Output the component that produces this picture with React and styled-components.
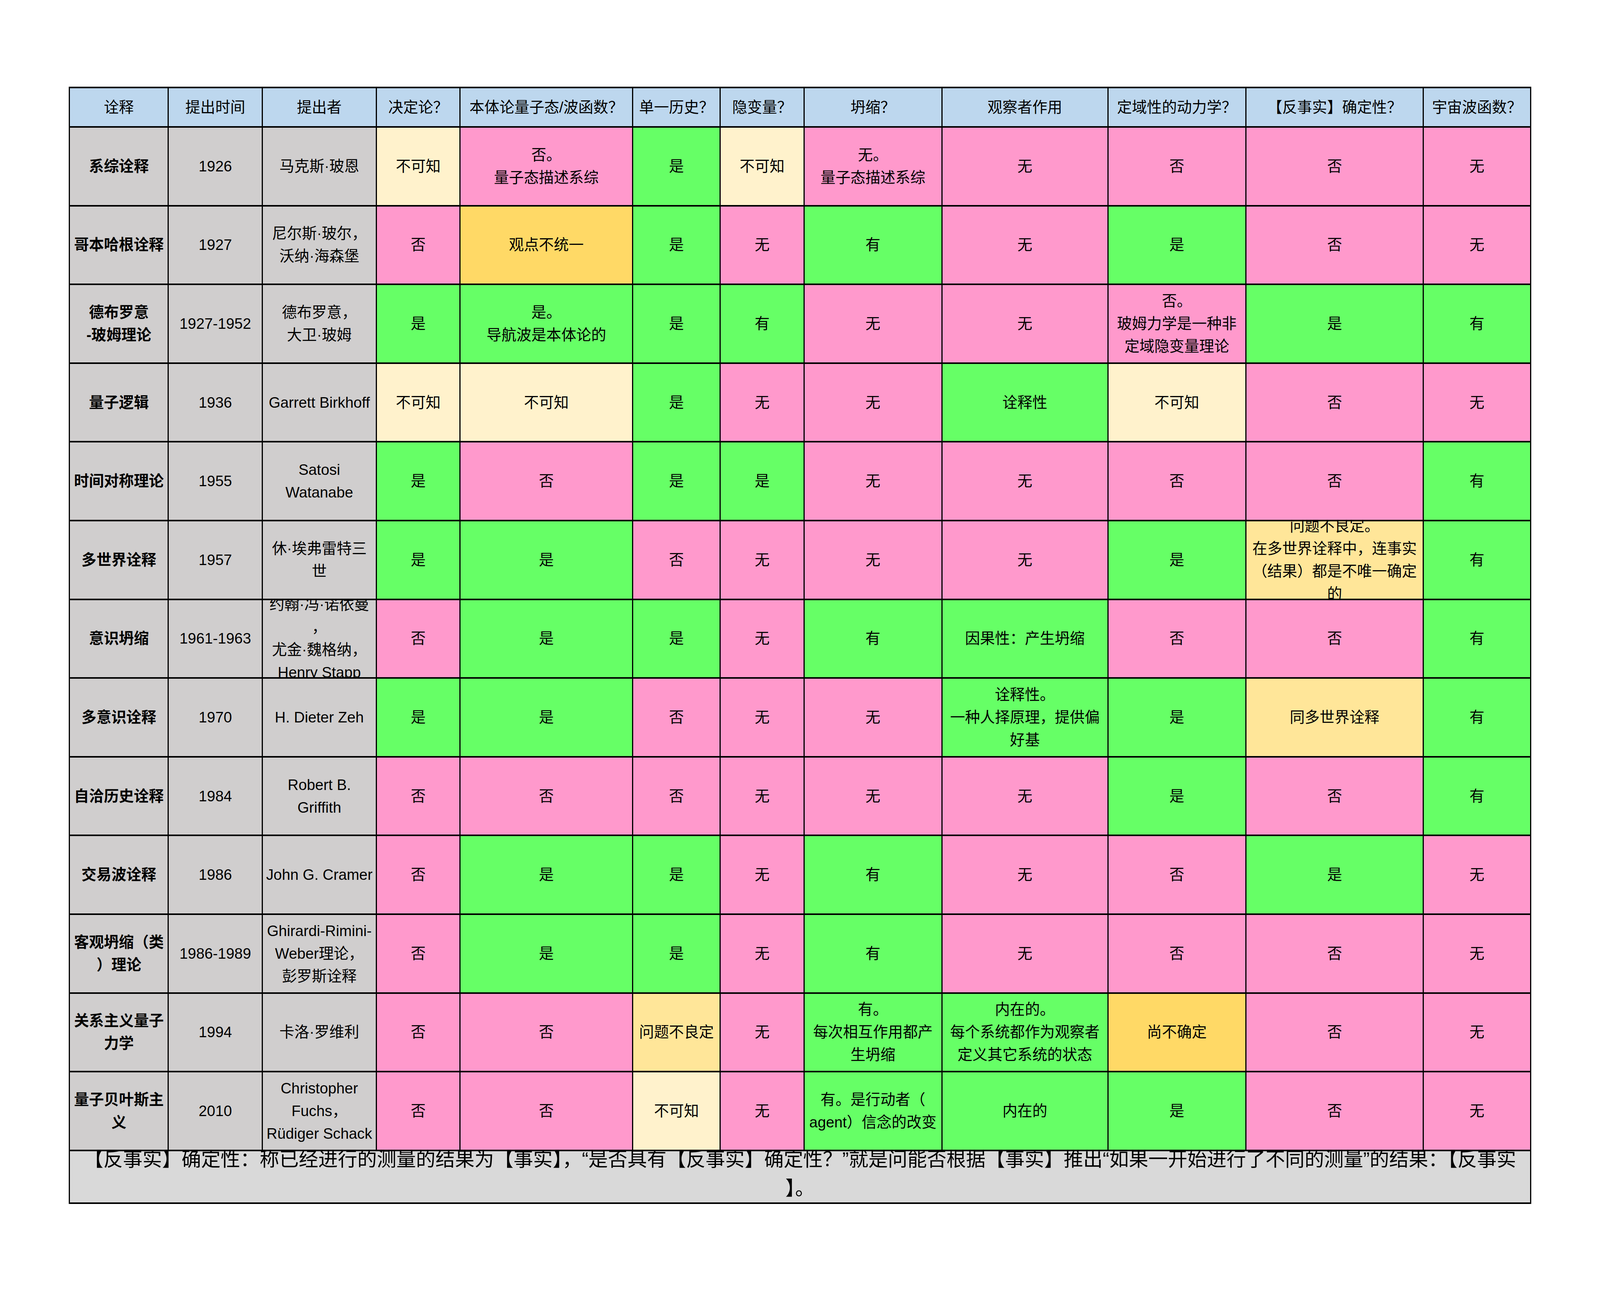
import React from 'react';
import styled, { createGlobalStyle } from 'styled-components';

const GlobalStyle = createGlobalStyle`
  html, body {
    margin: 0;
    padding: 0;
    background: #fff;
  }
  body {
    font-family: "Liberation Sans", "Noto Sans CJK SC", sans-serif;
    color: #000;
  }
`;

const palette = {
  H: '#BDD7EE',
  N: '#D0CECE',
  P: '#FF99CC',
  G: '#66FF66',
  Y: '#FFF2CC',
  O: '#FFD966',
  L: '#FFE699',
  F: '#D9D9D9',
};

// cell widths, gridline pitch minus the 3px rule
const columnWidths = [250.1, 237.5, 289.1, 211.2, 438.9, 221.4, 211.2, 350, 422, 350.1, 451.6, 271.4];

const headers = [
  '诠释', '提出时间', '提出者', '决定论？', '本体论量子态/波函数？', '单一历史？',
  '隐变量？', '坍缩？', '观察者作用', '定域性的动力学？', '【反事实】确定性？', '宇宙波函数？',
];

const rows = [
  {
    name: '系综诠释', year: '1926', by: '马克斯·玻恩',
    cells: [['Y', '不可知'], ['P', '否。\n量子态描述系综'], ['G', '是'], ['Y', '不可知'], ['P', '无。\n量子态描述系综'], ['P', '无'], ['P', '否'], ['P', '否'], ['P', '无']],
  },
  {
    name: '哥本哈根诠释', year: '1927', by: '尼尔斯·玻尔，\n沃纳·海森堡',
    cells: [['P', '否'], ['O', '观点不统一'], ['G', '是'], ['P', '无'], ['G', '有'], ['P', '无'], ['G', '是'], ['P', '否'], ['P', '无']],
  },
  {
    name: '德布罗意\n-玻姆理论', year: '1927-1952', by: '德布罗意，\n大卫·玻姆',
    cells: [['G', '是'], ['G', '是。\n导航波是本体论的'], ['G', '是'], ['G', '有'], ['P', '无'], ['P', '无'], ['P', '否。\n玻姆力学是一种非\n定域隐变量理论'], ['G', '是'], ['G', '有']],
  },
  {
    name: '量子逻辑', year: '1936', by: 'Garrett Birkhoff',
    cells: [['Y', '不可知'], ['Y', '不可知'], ['G', '是'], ['P', '无'], ['P', '无'], ['G', '诠释性'], ['Y', '不可知'], ['P', '否'], ['P', '无']],
  },
  {
    name: '时间对称理论', year: '1955', by: 'Satosi\nWatanabe',
    cells: [['G', '是'], ['P', '否'], ['G', '是'], ['G', '是'], ['P', '无'], ['P', '无'], ['P', '否'], ['P', '否'], ['G', '有']],
  },
  {
    name: '多世界诠释', year: '1957', by: '休·埃弗雷特三\n世',
    cells: [['G', '是'], ['G', '是'], ['P', '否'], ['P', '无'], ['P', '无'], ['P', '无'], ['G', '是'], ['L', '问题不良定。\n在多世界诠释中，连事实\n（结果）都是不唯一确定\n的'], ['G', '有']],
  },
  {
    name: '意识坍缩', year: '1961-1963', by: '约翰·冯·诺依曼\n，\n尤金·魏格纳，\nHenry Stapp',
    cells: [['P', '否'], ['G', '是'], ['G', '是'], ['P', '无'], ['G', '有'], ['G', '因果性：产生坍缩'], ['P', '否'], ['P', '否'], ['G', '有']],
  },
  {
    name: '多意识诠释', year: '1970', by: 'H. Dieter Zeh',
    cells: [['G', '是'], ['G', '是'], ['P', '否'], ['P', '无'], ['P', '无'], ['G', '诠释性。\n一种人择原理，提供偏\n好基'], ['G', '是'], ['L', '同多世界诠释'], ['G', '有']],
  },
  {
    name: '自洽历史诠释', year: '1984', by: 'Robert B.\nGriffith',
    cells: [['P', '否'], ['P', '否'], ['P', '否'], ['P', '无'], ['P', '无'], ['P', '无'], ['G', '是'], ['P', '否'], ['G', '有']],
  },
  {
    name: '交易波诠释', year: '1986', by: 'John G. Cramer',
    cells: [['P', '否'], ['G', '是'], ['G', '是'], ['P', '无'], ['G', '有'], ['P', '无'], ['P', '否'], ['G', '是'], ['P', '无']],
  },
  {
    name: '客观坍缩（类\n）理论', year: '1986-1989', by: 'Ghirardi-Rimini-\nWeber理论，\n彭罗斯诠释',
    cells: [['P', '否'], ['G', '是'], ['G', '是'], ['P', '无'], ['G', '有'], ['P', '无'], ['P', '否'], ['P', '否'], ['P', '无']],
  },
  {
    name: '关系主义量子\n力学', year: '1994', by: '卡洛·罗维利',
    cells: [['P', '否'], ['P', '否'], ['L', '问题不良定'], ['P', '无'], ['G', '有。\n每次相互作用都产\n生坍缩'], ['G', '内在的。\n每个系统都作为观察者\n定义其它系统的状态'], ['O', '尚不确定'], ['P', '否'], ['P', '无']],
  },
  {
    name: '量子贝叶斯主\n义', year: '2010', by: 'Christopher\nFuchs，\nRüdiger Schack',
    cells: [['P', '否'], ['P', '否'], ['Y', '不可知'], ['P', '无'], ['G', '有。是行动者（\nagent）信念的改变'], ['G', '内在的'], ['G', '是'], ['P', '否'], ['P', '无']],
  },
];

const footnoteLines = [
  '【反事实】确定性：称已经进行的测量的结果为【事实】，“是否具有【反事实】确定性？”就是问能否根据【事实】推出“如果一开始进行了不同的测量”的结果：【反事实',
  '】。',
];

const Page = styled.div`
  padding: 222px 0 0 176.3px;
`;

const Sheet = styled.div`
  display: grid;
  grid-template-columns: ${columnWidths.map(w => `${w}px`).join(' ')};
  grid-template-rows: 97px repeat(13, 197.6px) 131px;
  gap: 4px 3px;
  padding: 4px 3px;
  background: #000;
  width: fit-content;
`;

const Cell = styled.div`
  background: ${props => palette[props.$tone] || '#fff'};
  display: flex;
  align-items: center;
  justify-content: center;
  overflow: hidden;
  text-align: center;
  white-space: nowrap;
  font-size: 38.3px;
  line-height: 58px;
  font-weight: ${props => (props.$bold ? 700 : 400)};
`;

const Footnote = styled(Cell)`
  grid-column: 1 / -1;
  font-size: 50px;
  line-height: 74px;
  padding-bottom: 14px;
  box-sizing: border-box;
`;

const Lines = ({ text }) => {
  const parts = Array.isArray(text) ? text : text.split('\n');
  return (
    <div>
      {parts.map((line, i) => (
        <React.Fragment key={i}>
          {i > 0 && <br />}
          {line}
        </React.Fragment>
      ))}
    </div>
  );
};

const App = () => (
  <Page>
    <GlobalStyle />
    <Sheet>
      {headers.map(h => (
        <Cell key={h} $tone="H">
          <Lines text={h} />
        </Cell>
      ))}
      {rows.map(row => (
        <React.Fragment key={row.name}>
          <Cell $tone="N" $bold>
            <Lines text={row.name} />
          </Cell>
          <Cell $tone="N">
            <Lines text={row.year} />
          </Cell>
          <Cell $tone="N">
            <Lines text={row.by} />
          </Cell>
          {row.cells.map(([tone, text], i) => (
            <Cell key={i} $tone={tone}>
              <Lines text={text} />
            </Cell>
          ))}
        </React.Fragment>
      ))}
      <Footnote $tone="F">
        <Lines text={footnoteLines} />
      </Footnote>
    </Sheet>
  </Page>
);

export default App;
